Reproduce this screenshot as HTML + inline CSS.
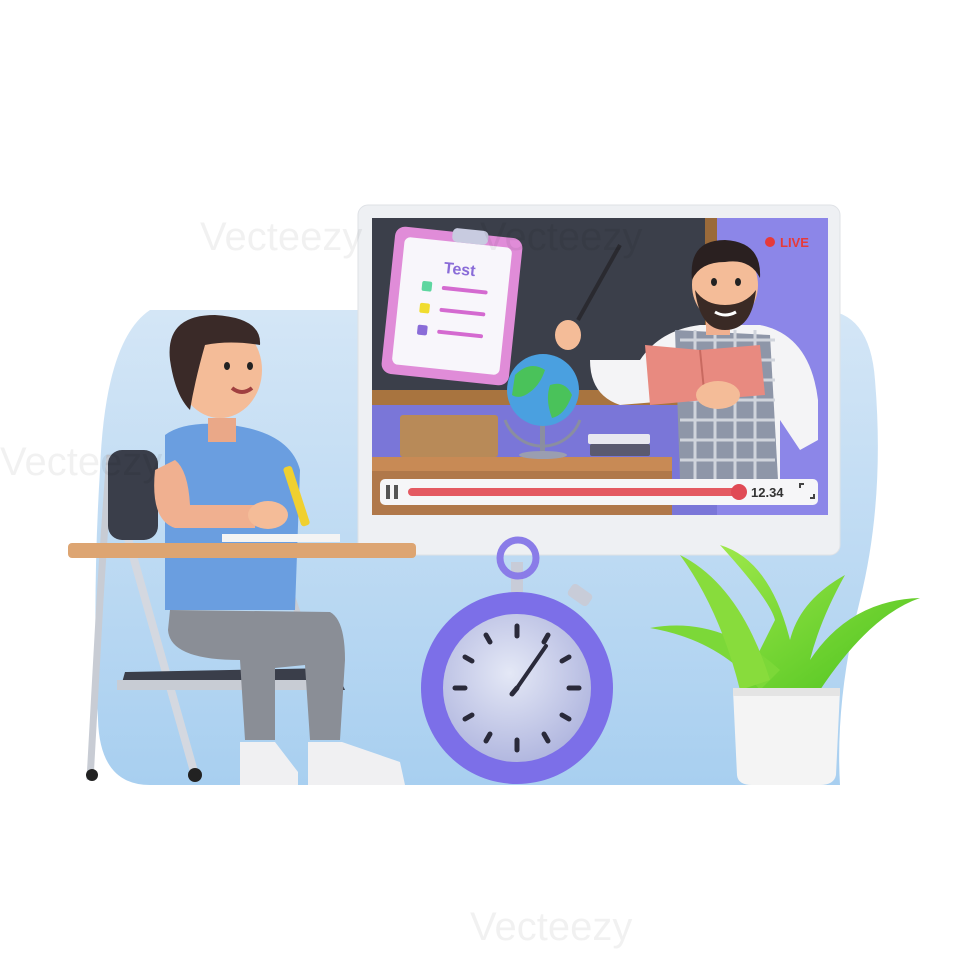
<!DOCTYPE html>
<html><head><meta charset="utf-8"><style>
html,body{margin:0;padding:0;background:#fff;width:980px;height:980px;overflow:hidden}
svg{display:block}
</style></head><body>
<svg width="980" height="980" viewBox="0 0 980 980" xmlns="http://www.w3.org/2000/svg" font-family="Liberation Sans, sans-serif">
<defs>
<linearGradient id="bg" x1="0" y1="0" x2="0" y2="1"><stop offset="0" stop-color="#d4e6f6"/><stop offset="1" stop-color="#a8cff0"/></linearGradient>
<radialGradient id="face" cx="0.45" cy="0.4" r="0.7"><stop offset="0" stop-color="#e4e8f6"/><stop offset="1" stop-color="#aab0dc"/></radialGradient>
<linearGradient id="leaf" x1="0" y1="0" x2="1" y2="1"><stop offset="0" stop-color="#9ee84a"/><stop offset="1" stop-color="#4cc21e"/></linearGradient>
</defs>
<!-- background blob -->
<path d="M150 310 L820 310 Q870 310 875 380 Q885 500 860 600 Q835 700 840 785 L150 785 Q100 785 98 720 Q92 600 100 470 Q105 340 150 310 Z" fill="url(#bg)"/>
<!-- monitor -->
<rect x="358" y="205" width="482" height="350" rx="10" fill="#eef0f3" stroke="#dfe2e6"/>
<rect x="372" y="218" width="456" height="297" fill="#3b3f4a"/>
<rect x="715" y="218" width="113" height="297" fill="#8c86e8"/>
<rect x="705" y="218" width="12" height="180" fill="#9a6a3a"/>
<rect x="372" y="390" width="345" height="15" fill="#a8743f"/>
<rect x="372" y="405" width="345" height="110" fill="#7a76d8"/>
<rect x="372" y="457" width="300" height="58" fill="#b0784a"/>
<rect x="372" y="457" width="300" height="14" fill="#c88a55"/>
<rect x="400" y="415" width="98" height="42" rx="3" fill="#b88a58"/>
<rect x="588" y="434" width="62" height="10" rx="2" fill="#e8e8f0"/>
<rect x="590" y="444" width="60" height="12" rx="2" fill="#5a5a70"/>
<!-- LIVE -->
<circle cx="770" cy="242" r="5" fill="#e63a3a"/>
<text x="780" y="247" font-size="13" fill="#e63a3a" font-weight="bold">LIVE</text>
<!-- clipboard -->
<rect x="388" y="232" width="128" height="148" rx="10" fill="#e08cd8" transform="rotate(6 452 306)"/>
<rect x="398" y="242" width="108" height="128" rx="6" fill="#f8f6fb" transform="rotate(6 452 306)"/>
<rect x="445" y="228" width="36" height="14" rx="5" fill="#c8cbe0" transform="rotate(6 452 306)"/>
<g transform="rotate(6 452 306)">
<text x="440" y="274" font-size="16" font-weight="bold" fill="#8a6cd8">Test</text>
<rect x="420" y="284" width="10" height="10" rx="2" fill="#5ed6a0"/><rect x="440" y="287" width="46" height="4" rx="2" fill="#d46ad0"/>
<rect x="420" y="306" width="10" height="10" rx="2" fill="#f0dc30"/><rect x="440" y="309" width="46" height="4" rx="2" fill="#d46ad0"/>
<rect x="420" y="328" width="10" height="10" rx="2" fill="#8a6cd8"/><rect x="440" y="331" width="46" height="4" rx="2" fill="#d46ad0"/>
</g>
<!-- globe -->
<path d="M505 420 A40 40 0 0 0 580 420" stroke="#8a8ea0" stroke-width="3" fill="none"/>
<rect x="540" y="425" width="5" height="28" fill="#8a8ea0"/>
<ellipse cx="543" cy="455" rx="24" ry="4" fill="#9a9eb0"/>
<circle cx="543" cy="390" r="36" fill="#4aa0e0"/>
<path d="M515 375 Q530 360 545 370 Q540 385 530 392 Q520 400 512 395 Z M550 385 Q565 380 572 395 Q565 415 552 418 Q545 400 550 385Z" fill="#4ac25a"/>
<!-- pointer -->
<line x1="578" y1="320" x2="620" y2="245" stroke="#2a2a30" stroke-width="4"/>
<!-- teacher -->
<path d="M640 360 Q660 330 700 325 L760 325 Q810 335 818 400 L818 440 L800 450 L780 420 L780 500 L680 500 L680 400 L620 405 Q590 395 590 360 Z" fill="#f4f4f6"/>
<path d="M675 330 L770 335 L778 480 L680 480 Z" fill="#8e96a8"/>
<path d="M680 340 L775 340 M680 360 L775 360 M680 380 L775 380 M680 400 L775 400 M680 420 L775 420 M680 440 L775 440 M680 460 L775 460 M695 330 L695 480 M715 330 L715 480 M735 330 L735 480 M755 330 L755 480" stroke="#d0d4dc" stroke-width="3"/>
<rect x="706" y="310" width="24" height="25" fill="#f0b090"/>
<ellipse cx="725" cy="285" rx="33" ry="38" fill="#f4bc98"/>
<path d="M695 290 Q700 330 725 330 Q752 330 756 290 Q745 305 725 305 Q705 305 695 290Z" fill="#3a2a25"/>
<path d="M692 280 Q688 240 725 240 Q762 242 760 278 Q750 258 725 262 Q700 262 692 280Z" fill="#2a2020"/>
<ellipse cx="714" cy="282" rx="3" ry="4" fill="#222"/><ellipse cx="738" cy="282" rx="3" ry="4" fill="#222"/>
<path d="M715 312 Q725 318 736 312" stroke="#fff" stroke-width="3" fill="none"/>
<path d="M645 345 L700 350 L760 345 L765 395 L705 400 L650 405 Z" fill="#e88a80"/>
<path d="M700 350 L705 400" stroke="#c86a60" stroke-width="2"/>
<ellipse cx="718" cy="395" rx="22" ry="14" fill="#f4bc98"/>
<ellipse cx="568" cy="335" rx="13" ry="15" fill="#f4bc98"/>
<!-- progress -->
<rect x="380" y="479" width="438" height="26" rx="5" fill="#f6f6f8"/>
<rect x="386" y="485" width="4" height="14" fill="#555"/><rect x="394" y="485" width="4" height="14" fill="#555"/>
<rect x="408" y="488" width="332" height="8" rx="4" fill="#e45a62"/>
<circle cx="739" cy="492" r="8" fill="#e04a55"/>
<text x="751" y="497" font-size="13" font-weight="bold" fill="#333">12.34</text>
<path d="M800 488 L800 484 L804 484 M810 498 L814 498 L814 494" stroke="#444" stroke-width="2" fill="none"/>
<!-- stopwatch -->
<rect x="511" y="562" width="12" height="30" fill="#c8ccd8"/>
<circle cx="518" cy="558" r="18" fill="none" stroke="#8a7ce8" stroke-width="7"/>
<rect x="568" y="588" width="24" height="14" rx="4" fill="#c8ccd8" transform="rotate(35 580 595)"/>
<circle cx="517" cy="688" r="96" fill="#7c6fe8"/>
<circle cx="517" cy="688" r="74" fill="url(#face)"/>
<g stroke="#2a2a3a" stroke-width="5" stroke-linecap="round">
<line x1="517" y1="626" x2="517" y2="636"/><line x1="517" y1="740" x2="517" y2="750"/>
<line x1="455" y1="688" x2="465" y2="688"/><line x1="569" y1="688" x2="579" y2="688"/>
<line x1="486" y1="635" x2="490" y2="642"/><line x1="548" y1="635" x2="544" y2="642"/>
<line x1="465" y1="657" x2="472" y2="661"/><line x1="569" y1="657" x2="562" y2="661"/>
<line x1="465" y1="719" x2="472" y2="715"/><line x1="569" y1="719" x2="562" y2="715"/>
<line x1="486" y1="741" x2="490" y2="734"/><line x1="548" y1="741" x2="544" y2="734"/>
<line x1="517" y1="688" x2="546" y2="646" stroke-width="4"/><line x1="517" y1="688" x2="512" y2="694"/>
</g>
<!-- plant -->
<path d="M740 690 L775 620 Q770 600 720 545 Q770 560 790 640 Q800 600 845 575 Q820 620 810 660 Q850 600 920 598 Q870 615 820 690 Z" fill="url(#leaf)"/>
<path d="M760 690 Q720 640 650 628 Q720 615 780 670 Z" fill="#7cd838"/>
<path d="M740 690 Q720 610 680 555 Q740 585 770 680Z" fill="#88dc3c"/>
<path d="M733 690 L840 690 L836 775 Q834 785 820 785 L752 785 Q738 785 737 775 Z" fill="#f4f4f4"/>
<rect x="733" y="688" width="107" height="8" fill="#e4e4e4"/>
<!-- chair -->
<path d="M110 455 Q105 520 100 600 L90 780" stroke="#c8ccd4" stroke-width="7" fill="none"/>
<path d="M120 510 L195 775" stroke="#d4d8e0" stroke-width="8"/>
<path d="M280 560 L300 620" stroke="#c8ccd4" stroke-width="6"/>
<rect x="108" y="450" width="50" height="90" rx="14" fill="#3a3e4a"/>
<path d="M125 672 L335 668 L345 690 L120 690 Z" fill="#3a3e4a"/>
<rect x="117" y="680" width="225" height="10" fill="#c8ccd4"/>
<circle cx="92" cy="775" r="6" fill="#222"/><circle cx="195" cy="775" r="7" fill="#222"/>
<!-- boy -->
<path d="M165 435 Q185 420 230 425 Q290 432 300 470 L295 610 L165 610 Z" fill="#6a9ee0"/>
<path d="M170 610 L330 612 Q345 620 345 660 L340 740 L310 740 L305 665 L275 668 L275 740 L245 740 L240 660 Q170 660 168 630 Z" fill="#8a8e96"/>
<path d="M240 742 L275 742 L298 772 L298 785 L240 785 Z" fill="#f0f0f2"/>
<path d="M308 742 L342 742 L400 762 L405 785 L308 785 Z" fill="#f0f0f2"/>
<path d="M155 470 Q150 520 175 528 L255 528 L258 505 L190 505 Q188 470 175 460Z" fill="#f0b090"/>
<rect x="208" y="418" width="28" height="24" fill="#eaa888"/>
<ellipse cx="220" cy="370" rx="42" ry="48" fill="#f4bc98"/>
<path d="M170 360 Q165 315 215 315 Q262 318 260 345 Q230 340 205 345 Q195 380 190 410 Q175 395 170 360Z" fill="#3a2a28"/>
<ellipse cx="227" cy="366" rx="3" ry="4" fill="#222"/><ellipse cx="250" cy="366" rx="3" ry="4" fill="#222"/>
<path d="M232 388 Q242 396 252 388" stroke="#a04040" stroke-width="4" fill="none"/>
<ellipse cx="268" cy="515" rx="20" ry="14" fill="#f4bc98"/>
<rect x="292" y="465" width="9" height="62" rx="3" fill="#f0d030" transform="rotate(-18 297 496)"/>
<!-- desk -->
<rect x="222" y="534" width="118" height="8" fill="#f4f4f4"/>
<rect x="68" y="543" width="348" height="15" rx="4" fill="#dda572"/>
<!-- watermarks -->
<g fill="#000" opacity="0.05" font-size="40">
<text x="200" y="250">Vecteezy</text><text x="480" y="250">Vecteezy</text>
<text x="470" y="940">Vecteezy</text><text x="0" y="475">Vecteezy</text>
</g>
</svg>
</body></html>
